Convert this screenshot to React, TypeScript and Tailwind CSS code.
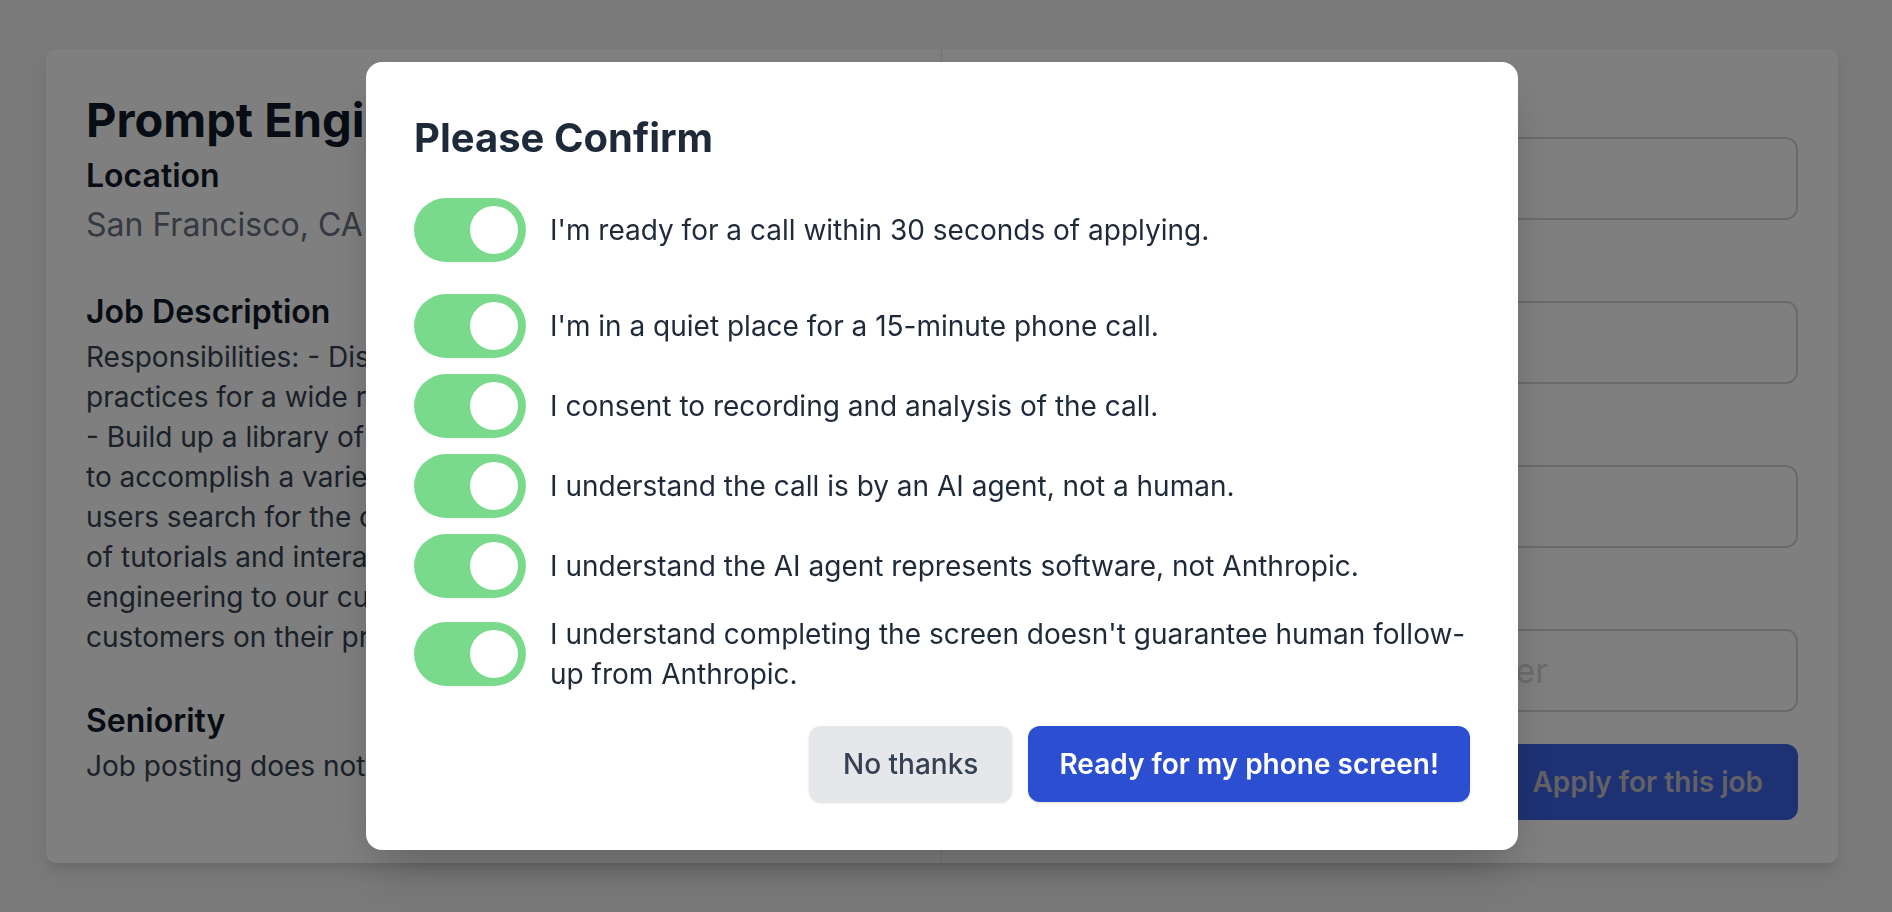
import React, { useState } from 'react';

const DESCRIPTION = [
    'Responsibilities: - Discover, test, and document best',
    'practices for a wide range of tasks relevant to our',
    '- Build up a library of high quality prompts or chains',
    'to accomplish a variety of tasks, with a guide to help',
    'users search for the one that meets their needs.',
    'of tutorials and interactive tools that teach prompt',
    'engineering to our customers. - Work with large',
    'customers on their prompting strategies.',
].join('\n');

const CONFIRMATIONS = [
    "I'm ready for a call within 30 seconds of applying.",
    "I'm in a quiet place for a 15-minute phone call.",
    'I consent to recording and analysis of the call.',
    'I understand the call is by an AI agent, not a human.',
    'I understand the AI agent represents software, not Anthropic.',
    "I understand completing the screen doesn't guarantee human follow-up from Anthropic.",
];

const FIELDS = [
    { label: 'Full name', placeholder: '' },
    { label: 'Email', placeholder: '' },
    { label: 'LinkedIn profile', placeholder: '' },
    { label: 'Phone number', placeholder: 'Enter your phone number' },
];

// Big green switch, knob sits right when on
const Toggle: React.FC<{ on: boolean; onClick: () => void }> = ({ on, onClick }) => (
    <button
        type="button"
        role="switch"
        aria-checked={on}
        onClick={onClick}
        className={`shrink-0 w-[112px] h-16 rounded-full p-2 flex ${on ? 'justify-end bg-[#7ada8b]' : 'justify-start bg-gray-300'}`}
    >
        <span className="block size-12 rounded-full bg-white" />
    </button>
);

export default function App() {
    const [checked, setChecked] = useState<boolean[]>(CONFIRMATIONS.map(() => true));

    const flip = (i: number) => setChecked(prev => prev.map((v, j) => (j === i ? !v : v)));

    return (
        <div className="min-h-screen bg-[#f2f2f4] pr-2 font-['Inter',sans-serif]">
            {/* PAGE: job card behind the dialog */}
            <div className="px-[46px] pt-[49px] pb-[48px]">
                <div className="flex bg-white rounded-[10px] shadow-lg">

                    {/* LEFT: job details */}
                    <div className="w-1/2 p-10 border-r border-gray-200">
                        <h1 className="text-[47px] leading-[62px] font-bold text-gray-900">Prompt Engineer</h1>

                        <h2 className="mt-[5px] text-[32px] leading-[40px] font-semibold text-gray-900">Location</h2>
                        <p className="text-[32px] leading-[57px] text-gray-500">San Francisco, CA</p>

                        <h2 className="mt-[36px] text-[32px] leading-[45px] font-semibold text-gray-900">Job Description</h2>
                        <p className="mt-[3px] text-[28px] leading-[40px] text-gray-700 whitespace-pre-line">{DESCRIPTION}</p>

                        <h2 className="mt-[41px] text-[32px] leading-[45px] font-semibold text-gray-900">Seniority</h2>
                        <p className="mt-[3px] text-[28px] leading-[40px] text-gray-700">Job posting does not specify seniority.</p>
                    </div>

                    {/* RIGHT: application form */}
                    <div className="w-1/2 p-10 pb-[43px] flex flex-col">
                        <div className="flex flex-col gap-[33px]">
                            {FIELDS.map(f => (
                                <div key={f.label} className="flex flex-col gap-2">
                                    <label className="text-[28px] leading-[40px] font-medium text-gray-700">{f.label}</label>
                                    <input
                                        placeholder={f.placeholder}
                                        className="h-[83px] w-full rounded-xl border-2 border-gray-300 pl-[155px] pr-6 text-[34px] placeholder:text-[#d8d8dc] outline-none"
                                    />
                                </div>
                            ))}
                        </div>
                        <button className="mt-8 self-end h-[76px] px-[35px] rounded-xl bg-[#3c63e6] text-[28px] font-semibold text-[#c4c4cc]">
                            Apply for this job
                        </button>
                    </div>
                </div>
            </div>

            {/* OVERLAY + DIALOG */}
            <div className="fixed inset-0 bg-black/50 flex items-center justify-center pr-2">
                <div className="w-[1152px] bg-white rounded-2xl shadow-2xl p-12">
                    <h2 className="mb-8 text-[40px] leading-[56px] font-bold text-gray-800">Please Confirm</h2>

                    <div className="flex flex-col gap-4">
                        {CONFIRMATIONS.map((text, i) => (
                            <div key={i} className={`flex items-center gap-6 ${i === 0 ? 'mb-4' : ''}`}>
                                <Toggle on={checked[i]} onClick={() => flip(i)} />
                                <span className="text-[28px] leading-[40px] text-gray-800">{text}</span>
                            </div>
                        ))}
                    </div>

                    <div className="mt-8 flex justify-end gap-4">
                        <button className="h-[76px] px-[34px] rounded-xl bg-gray-200 text-[28px] font-medium text-gray-700 shadow-sm">
                            No thanks
                        </button>
                        <button className="h-[76px] px-[31px] rounded-xl bg-[#2c4fd1] text-[28px] font-semibold text-white shadow-sm">
                            Ready for my phone screen!
                        </button>
                    </div>
                </div>
            </div>
        </div>
    );
}
